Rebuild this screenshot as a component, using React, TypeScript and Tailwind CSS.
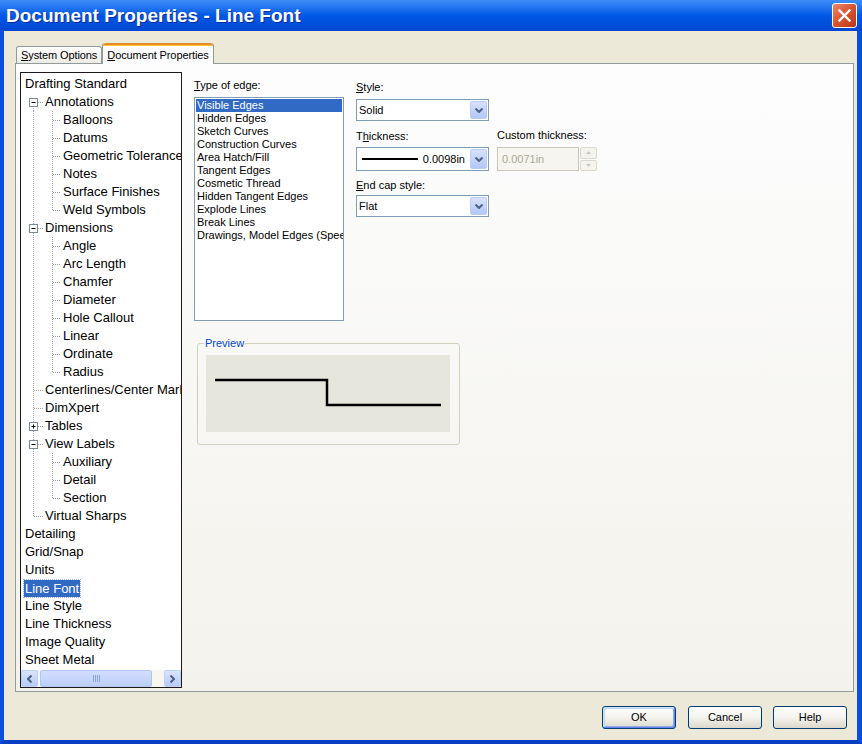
import React from 'react';

type TreeRow = {
  label: string;
  level: 0 | 1 | 2;
  box?: '+' | '-';
  first?: boolean;
  last?: boolean;
  selected?: boolean;
};

const treeRows: TreeRow[] = [
  { label: 'Drafting Standard', level: 0 },
  { label: 'Annotations', level: 1, box: '-', first: true },
  { label: 'Balloons', level: 2 },
  { label: 'Datums', level: 2 },
  { label: 'Geometric Tolerance', level: 2 },
  { label: 'Notes', level: 2 },
  { label: 'Surface Finishes', level: 2 },
  { label: 'Weld Symbols', level: 2, last: true },
  { label: 'Dimensions', level: 1, box: '-' },
  { label: 'Angle', level: 2 },
  { label: 'Arc Length', level: 2 },
  { label: 'Chamfer', level: 2 },
  { label: 'Diameter', level: 2 },
  { label: 'Hole Callout', level: 2 },
  { label: 'Linear', level: 2 },
  { label: 'Ordinate', level: 2 },
  { label: 'Radius', level: 2, last: true },
  { label: 'Centerlines/Center Mark', level: 1 },
  { label: 'DimXpert', level: 1 },
  { label: 'Tables', level: 1, box: '+' },
  { label: 'View Labels', level: 1, box: '-' },
  { label: 'Auxiliary', level: 2 },
  { label: 'Detail', level: 2 },
  { label: 'Section', level: 2, last: true },
  { label: 'Virtual Sharps', level: 1, last: true },
  { label: 'Detailing', level: 0 },
  { label: 'Grid/Snap', level: 0 },
  { label: 'Units', level: 0 },
  { label: 'Line Font', level: 0, selected: true },
  { label: 'Line Style', level: 0 },
  { label: 'Line Thickness', level: 0 },
  { label: 'Image Quality', level: 0 },
  { label: 'Sheet Metal', level: 0 },
];

const edgeTypes = [
  'Visible Edges',
  'Hidden Edges',
  'Sketch Curves',
  'Construction Curves',
  'Area Hatch/Fill',
  'Tangent Edges',
  'Cosmetic Thread',
  'Hidden Tangent Edges',
  'Explode Lines',
  'Break Lines',
  'Drawings, Model Edges (Speed pak)',
];

const dot = { stroke: '#a0a0a0', strokeWidth: 1, strokeDasharray: '1 1' };

function Connectors({ row }: { row: TreeRow }) {
  if (row.level === 1) {
    return (
      <svg width="24" height="18" className="shrink-0">
        {row.first ? (
          <line x1="12.5" y1="13" x2="12.5" y2="18" {...dot} />
        ) : row.last ? (
          <line x1="12.5" y1="0" x2="12.5" y2="9" {...dot} />
        ) : (
          <line x1="12.5" y1="0" x2="12.5" y2="18" {...dot} />
        )}
        <line x1={row.box ? 17 : 13} y1="9.5" x2="22" y2="9.5" {...dot} />
        {row.box && (
          <g>
            <rect x="8.5" y="5.5" width="8" height="8" fill="#fff" stroke="#7a8a99" />
            <line x1="10.5" y1="9.5" x2="14.5" y2="9.5" stroke="#000" />
            {row.box === '+' && <line x1="12.5" y1="7.5" x2="12.5" y2="11.5" stroke="#000" />}
          </g>
        )}
      </svg>
    );
  }
  return (
    <svg width="42" height="18" className="shrink-0">
      <line x1="12.5" y1="0" x2="12.5" y2="18" {...dot} />
      <line x1="31.5" y1="0" x2="31.5" y2={row.last ? 9 : 18} {...dot} />
      <line x1="32" y1="9.5" x2="40" y2="9.5" {...dot} />
    </svg>
  );
}

function Chevron({ color = '#4d6185' }: { color?: string }) {
  return (
    <svg width="8" height="5" viewBox="0 0 8 5">
      <polyline points="0.5,0.5 4,4 7.5,0.5" fill="none" stroke={color} strokeWidth="2" />
    </svg>
  );
}

function ComboButton() {
  return (
    <div className="m-[1px] flex w-[17px] items-center justify-center rounded-[2px] border border-[#b9cdf7] bg-linear-to-b from-[#d6e2fd] to-[#b3c7f6]">
      <Chevron />
    </div>
  );
}

function Combo({ children, tall }: { children: React.ReactNode; tall?: boolean }) {
  return (
    <div className={`flex w-[133px] border border-[#7f9db9] bg-white ${tall ? 'h-[24px]' : 'h-[22px]'}`}>
      <div className="flex flex-1 items-center pl-[2px] text-[11px]">{children}</div>
      <ComboButton />
    </div>
  );
}

function TreeView() {
  return (
    <div className="flex h-[616px] w-[162px] shrink-0 flex-col overflow-hidden border border-[#1a1a1a] bg-white">
      <div className="pt-[2px]">
        {treeRows.map((row) => (
          <div key={row.label} className="flex h-[18px] items-center whitespace-nowrap text-[13px] leading-[18px] text-black">
            {row.level === 0 ? (
              <span
                className={
                  row.selected
                    ? 'ml-[3px] bg-[#316ac5] px-[1px] leading-[17px] text-white outline-1 outline-dotted outline-[#9fb5dc]'
                    : 'pl-[4px]'
                }
              >
                {row.label}
              </span>
            ) : (
              <>
                <Connectors row={row} />
                <span>{row.label}</span>
              </>
            )}
          </div>
        ))}
      </div>
      <div className="mt-auto flex h-[17px] bg-[#f7f6f1]">
        <div className="flex w-[17px] items-center justify-center rounded-[2px] border border-[#c0d1f7] bg-linear-to-b from-[#d9e4fd] to-[#b8cbf7]">
          <svg width="5" height="8" viewBox="0 0 5 8">
            <polyline points="4.5,0.5 1,4 4.5,7.5" fill="none" stroke="#4d6185" strokeWidth="2" />
          </svg>
        </div>
        <div className="ml-[2px] flex w-[112px] items-center justify-center rounded-[2px] border border-[#b0c6f3] bg-linear-to-b from-[#d2defc] to-[#bccefa]">
          <div className="flex gap-[1px]">
            {[0, 1, 2, 3].map((i) => (
              <div key={i} className="h-[7px] w-[1px] bg-[#8ca6e2]" />
            ))}
          </div>
        </div>
        <div className="flex-1" />
        <div className="flex w-[17px] items-center justify-center rounded-[2px] border border-[#c0d1f7] bg-linear-to-b from-[#d9e4fd] to-[#b8cbf7]">
          <svg width="5" height="8" viewBox="0 0 5 8">
            <polyline points="0.5,0.5 4,4 0.5,7.5" fill="none" stroke="#4d6185" strokeWidth="2" />
          </svg>
        </div>
      </div>
    </div>
  );
}

function XpButton({ children, focused, className = '' }: { children: React.ReactNode; focused?: boolean; className?: string }) {
  return (
    <button
      className={`h-[23px] w-[74px] rounded-[3px] border border-[#003c74] bg-linear-to-b from-[#ffffff] via-[#f4f3ee] to-[#dcd8cc] text-[11px] text-black ${
        focused ? 'shadow-[inset_1px_1px_0_#cee7ff,inset_-1px_-1px_0_#6982ee,inset_2px_2px_0_#bcd4f6,inset_-2px_-2px_0_#89ade4]' : ''
      } ${className}`}
    >
      {children}
    </button>
  );
}

export default function App() {
  return (
    <div className="flex h-[744px] w-[862px] flex-col font-['Liberation_Sans',Arial,sans-serif]">
      {/* title bar */}
      <div className="flex h-[31px] shrink-0 items-center justify-between bg-linear-to-b from-[#3d8df8] via-[#0058e6] to-[#0047d0] pl-[6px] pr-[5px]">
        <span className="pt-[2px] text-[19px] font-bold text-white [text-shadow:1px_1px_0_#0b2da0]">
          Document Properties - Line Font
        </span>
        <div className="flex h-[25px] w-[25px] items-center justify-center rounded-[3px] border border-white bg-linear-to-br from-[#e8866a] via-[#d9532e] to-[#b8351a]">
          <svg width="13" height="13" viewBox="0 0 13 13">
            <path d="M1.5 1.5 L11.5 11.5 M11.5 1.5 L1.5 11.5" stroke="#fff" strokeWidth="2.4" strokeLinecap="square" />
          </svg>
        </div>
      </div>

      {/* window body */}
      <div className="flex flex-1 flex-col border-b-4 border-l-4 border-r-[5px] border-[#0a4ee0] border-b-[#0a3fc4] bg-[#ece9d8] pt-[12px] text-[11px]">
        {/* tabs */}
        <div className="ml-[12px] flex h-[20px] items-end">
          <div className="flex h-[17px] items-center rounded-t-[3px] border border-b-0 border-[#919b9c] bg-linear-to-b from-[#ffffff] to-[#ecebe5] px-[4px] leading-[13px] tracking-[-0.1px]">
            <u>S</u>ystem Options
          </div>
          <div className="relative z-10 -mb-[1px] flex h-[21px] flex-col rounded-t-[3px] border-x border-[#919b9c] bg-[#fcfcfe]">
            <div className="h-[3px] rounded-t-[3px] border-t-2 border-[#e68b2c] bg-[#ffc73c]" />
            <div className="flex flex-1 items-center px-[4px] leading-[13px] tracking-[-0.1px]">
              <u>D</u>ocument Properties
            </div>
          </div>
        </div>

        {/* tab panel */}
        <div className="ml-[11px] flex h-[629px] w-[839px] border border-[#919b9c] bg-linear-to-b from-[#fdfdfe] to-[#f3f2ec] pl-[4px] pt-[8px]">
          <TreeView />

          <div className="ml-[12px] flex flex-col pt-[7px]">
            <div className="flex">
              {/* type of edge */}
              <div className="w-[150px]">
                <div className="leading-[13px]">
                  <u>T</u>ype of edge:
                </div>
                <div className="mt-[5px] h-[224px] overflow-hidden border border-[#7f9db9] bg-white p-[1px]">
                  {edgeTypes.map((t, i) => (
                    <div
                      key={t}
                      className={`whitespace-nowrap px-[1px] leading-[13px] ${i === 0 ? 'bg-[#316ac5] text-white' : 'text-black'}`}
                    >
                      {t}
                    </div>
                  ))}
                </div>
              </div>

              {/* style / thickness / end cap */}
              <div className="ml-[12px] pt-[2px]">
                <div className="leading-[13px]">
                  <u>S</u>tyle:
                </div>
                <div className="mt-[5px]">
                  <Combo>Solid</Combo>
                </div>

                <div className="mt-[9px] flex">
                  <div>
                    <div className="leading-[13px]">
                      T<u>h</u>ickness:
                    </div>
                    <div className="mt-[4px]">
                      <Combo tall>
                        <div className="flex w-full items-center justify-between pl-[3px] pr-[4px]">
                          <div className="h-[2px] w-[56px] bg-black" />
                          <span>0.0098in</span>
                        </div>
                      </Combo>
                    </div>
                  </div>
                  <div className="ml-[8px] -mt-[1px]">
                    <div className="leading-[13px]">Custom thickness:</div>
                    <div className="mt-[5px] flex h-[24px]">
                      <div className="flex w-[82px] items-center border border-[#c9c7ba] bg-[#f6f5ef] pl-[4px] text-[#aca899]">
                        0.0071in
                      </div>
                      <div className="ml-[1px] flex w-[17px] flex-col gap-[1px]">
                        <div className="flex flex-1 items-center justify-center rounded-[2px] border border-[#dcdacd] bg-[#f4f3ee]">
                          <svg width="5" height="3" viewBox="0 0 5 3">
                            <polygon points="0,3 2.5,0 5,3" fill="#c9c7ba" />
                          </svg>
                        </div>
                        <div className="flex flex-1 items-center justify-center rounded-[2px] border border-[#dcdacd] bg-[#f4f3ee]">
                          <svg width="5" height="3" viewBox="0 0 5 3">
                            <polygon points="0,0 2.5,3 5,0" fill="#c9c7ba" />
                          </svg>
                        </div>
                      </div>
                    </div>
                  </div>
                </div>

                <div className="mt-[8px] leading-[13px]">
                  <u>E</u>nd cap style:
                </div>
                <div className="mt-[3px]">
                  <Combo>Flat</Combo>
                </div>
              </div>
            </div>

            {/* preview */}
            <fieldset className="ml-[3px] mt-[16px] w-[263px] rounded-[3px] border border-[#d0d0bf] px-[8px] pb-[12px] pt-[5px]">
              <legend className="-ml-[2px] px-[1px] leading-[13px] text-[#0046d5]">Preview</legend>
              <div className="h-[77px] w-[244px] bg-[#e7e6dd]">
                <svg width="244" height="77">
                  <polyline points="9,25 121,25 121,50 235,50" fill="none" stroke="#000" strokeWidth="2.5" />
                </svg>
              </div>
            </fieldset>
          </div>
        </div>

        {/* buttons */}
        <div className="mr-[10px] mt-[14px] flex justify-end">
          <XpButton focused>OK</XpButton>
          <XpButton className="ml-[12px]">Cancel</XpButton>
          <XpButton className="ml-[11px]">Help</XpButton>
        </div>
      </div>
    </div>
  );
}
